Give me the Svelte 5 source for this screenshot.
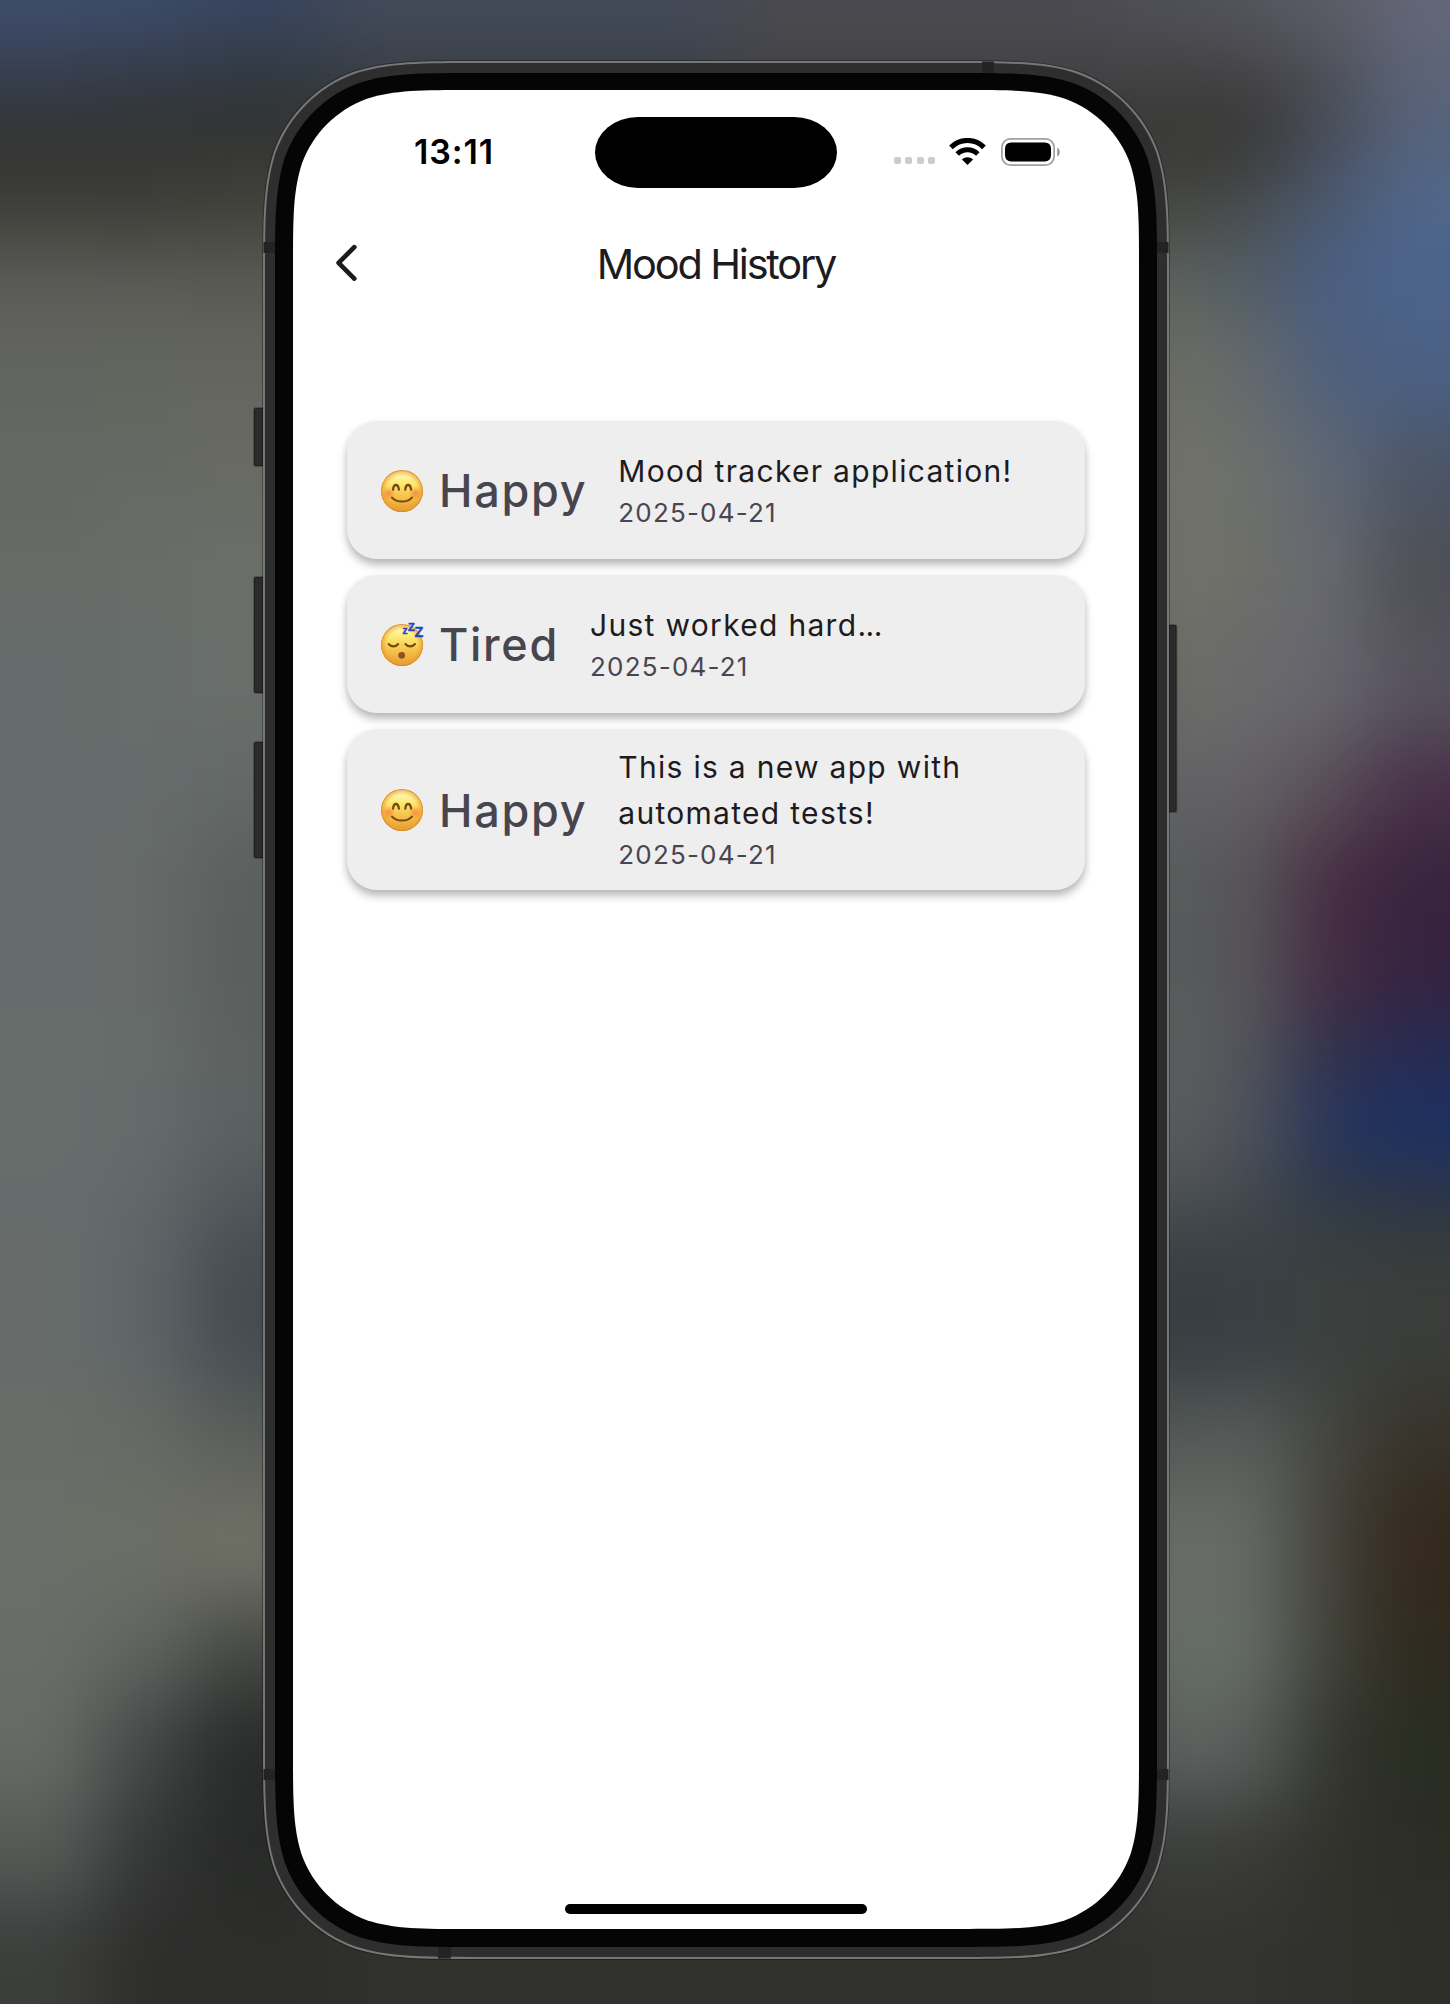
<script>
  const moods = [
    { face: 'happy', label: 'Happy', note: 'Mood tracker application!', tail: '', date: '2025-04-21' },
    { face: 'tired', label: 'Tired', note: 'Just worked hard', tail: '...', date: '2025-04-21' },
    { face: 'happy', label: 'Happy', note: 'This is a new app with automated tests!', tail: '', date: '2025-04-21' },
  ];

  // Continuous-curvature rounded rectangle
  function squircle(x, y, w, h, r) {
    const a = 1.52866 * r, b = 1.08849 * r, c = 0.86841 * r, d = 0.63149 * r;
    const e = 0.07491 * r, f = 0.37282 * r, g = 0.16906 * r;
    const X = x + w, Y = y + h;
    return `M${x + a},${y}L${X - a},${y}C${X - b},${y} ${X - c},${y} ${X - d},${y + e}` +
      `C${X - f},${y + g} ${X - g},${y + f} ${X - e},${y + d}C${X},${y + c} ${X},${y + b} ${X},${y + a}` +
      `L${X},${Y - a}C${X},${Y - b} ${X},${Y - c} ${X - e},${Y - d}` +
      `C${X - g},${Y - f} ${X - f},${Y - g} ${X - d},${Y - e}C${X - c},${Y} ${X - b},${Y} ${X - a},${Y}` +
      `L${x + a},${Y}C${x + b},${Y} ${x + c},${Y} ${x + d},${Y - e}` +
      `C${x + f},${Y - g} ${x + g},${Y - f} ${x + e},${Y - d}C${x},${Y - c} ${x},${Y - b} ${x},${Y - a}` +
      `L${x},${y + a}C${x},${y + b} ${x},${y + c} ${x + e},${y + d}` +
      `C${x + g},${y + f} ${x + f},${y + g} ${x + d},${y + e}C${x + c},${y} ${x + b},${y} ${x + a},${y}Z`;
  }

  // Backdrop colour field: blurred patches, one row per band
  const cols = [-150, 100, 190, 330, 720, 1120, 1220, 1290, 1370, 1600];
  const bands = [
    [-150, '3e4d6c 3c4b69 394660 434a5a 4a4a50 505158 55565e 5b5c66 646678'],
    [45, '363e4e 333b48 30383f 3a3f46 444548 424242 444447 4c4e56 5b6377'],
    [100, '333433 333433 333432 333333 333333 393835 373635 484d58 56637b'],
    [170, '3c3c37 3c3c37 40403a 444444 444444 444741 484d50 4a5971 4f668b'],
    [240, '5b5c57 5a5b55 5a5a54 555555 555555 5c625d 505b66 4a5e82 4c638a'],
    [320, '62645f 63655f 64655f 555555 555555 6b6d64 63696c 4e5f7d 4b6084'],
    [420, '656863 666963 686a63 555555 555555 70726a 6c6f6b 5e6775 4b5566'],
    [520, '666b68 686d69 6a6e69 555555 555555 707269 6d6e68 676970 4e4f55'],
    [620, '656b6a 676d6b 696e6b 555555 555555 6b6c67 6a6a6c 66656e 55525c'],
    [740, '656b6a 666c6b 646968 555555 555555 626365 636066 594e58 493149'],
    [830, '666c6b 666b6a 5b605f 555555 555555 585b5b 57545a 492f43 39243e'],
    [910, '666c6b 666b6a 5a5f5d 555555 555555 575a5a 555359 452b42 352340'],
    [1010, '676d6b 666c6a 5c615f 555555 555555 5b5e5d 52535a 33304b 282a50'],
    [1080, '676d6b 656b6a 5b6160 555555 555555 595c5d 4c5059 27355b 1d3062'],
    [1170, '666c6b 62686a 50575a 555555 555555 4a4f52 42474c 303945 2d3645'],
    [1230, '676c6b 5f6567 454c51 444444 444444 373d41 3a4044 3b403f 3a3d3a'],
    [1390, '686d68 666a65 5a5e5a 555555 555555 535856 585c5a 44453f 37332b'],
    [1480, '696e68 6b6e65 6d6e64 555555 555555 686c66 646a64 42413a 34291e'],
    [1610, '686d69 5f6360 444643 444444 444444 666d68 656b66 3f4139 2e2a1f'],
    [1700, '656a66 444745 292b2a 333333 333333 5d625f 595d5b 34362f 292d22'],
    [1800, '555a57 353736 282a29 30302c 30302c 3c3e3c 3a3b38 31322c 2c2d25'],
    [1900, '3c3e3c 2d2e2c 2d2e2b 30302c 30302c 33332f 33332f 30312c 2e2f28'],
    [2150, ''],
  ];
  const patches = bands.slice(0, -1).flatMap(([y, line], i) =>
    line.split(' ').map((c, j) => ({
      x: cols[j], y, w: cols[j + 1] - cols[j] + 1, h: bands[i + 1][0] - y + 1, fill: '#' + c,
    }))
  );
</script>

<div class="stage">
  <svg class="scene" width="1450" height="2004" viewBox="0 0 1450 2004" aria-hidden="true">
    <defs>
      <filter id="soft" filterUnits="userSpaceOnUse" x="-150" y="-150" width="1750" height="2300" color-interpolation-filters="sRGB">
        <feGaussianBlur stdDeviation="36" />
      </filter>
    </defs>
    <g filter="url(#soft)">
      {#each patches as p}
        <rect x={p.x} y={p.y} width={p.w} height={p.h} fill={p.fill} />
      {/each}
    </g>

    <g fill="#2b2b2b" stroke="#000" stroke-opacity=".25" stroke-width="2">
      <rect x="254" y="408" width="16" height="58" rx="2" />
      <rect x="254" y="577" width="16" height="116" rx="2" />
      <rect x="254" y="742" width="16" height="116" rx="2" />
      <rect x="1162" y="625" width="14.5" height="187" rx="2" />
    </g>
    <path d={squircle(262, 60, 908, 1900, 145)} fill="#000" fill-opacity=".3" />
    <path d={squircle(263, 61, 906, 1898, 144)} fill="#777" />
    <path d={squircle(265, 63, 902, 1894, 142)} fill="#2e2e2e" />
    <g fill="#232323">
      <rect x="263.5" y="242" width="12.5" height="11" />
      <rect x="1156" y="242" width="12.5" height="11" />
      <rect x="263.5" y="1769" width="12.5" height="11" />
      <rect x="1156" y="1769" width="12.5" height="11" />
      <rect x="982" y="61.5" width="12" height="12.5" />
      <rect x="438" y="1946" width="13" height="12.5" />
    </g>
    <path d={squircle(275, 73, 882, 1874, 133)} fill="#040504" />
    <path d={squircle(293, 90, 846, 1839, 117)} fill="#fff" />
  </svg>

  <main class="screen">
    <div class="status">
      <span class="time">13:11</span>
      <span class="island"></span>
      <div class="indicators">
        <span class="dots"><i></i><i></i><i></i><i></i></span>
        <svg class="wifi" width="37" height="27" viewBox="0 0 37 27">
          <path d="M2 9.3a23.4 23.4 0 0 1 33 0" fill="none" stroke="#000" stroke-width="5.2" />
          <path d="M8.2 15.9a14.6 14.6 0 0 1 20.6 0" fill="none" stroke="#000" stroke-width="5" />
          <path d="M18.5 27l-5.6-5.6a8.2 8.2 0 0 1 11.2 0z" />
        </svg>
        <svg class="battery" width="60" height="28" viewBox="0 0 60 28">
          <rect x=".9" y=".9" width="52.2" height="26.2" rx="8.5" fill="none" stroke="#a0a0a0" stroke-width="1.7" />
          <rect x="4" y="4.4" width="46" height="19" rx="5.8" />
          <path d="M56.2 9.6a4.9 4.9 0 0 1 0 8.8z" fill="#999" />
        </svg>
      </div>
    </div>

    <header class="bar">
      <svg class="back" width="24" height="38" viewBox="0 0 24 38">
        <path d="M19.3 3.2L3.6 18.8l15.7 15.8" fill="none" stroke="#1d1b20" stroke-width="4.7" stroke-linecap="round" stroke-linejoin="round" />
      </svg>
      <h1>Mood History</h1>
    </header>

    <section class="list">
      {#each moods as m, i}
        <article class="card">
          <svg class="face" width="42" height="42" viewBox="0 0 42 42">
            <defs>
              <linearGradient id="skin{i}" x1="0" y1="0" x2="0" y2="1">
                <stop offset="0" stop-color="#fffbd8" />
                <stop offset=".28" stop-color="#fdee78" />
                <stop offset=".6" stop-color="#f7c64d" />
                <stop offset="1" stop-color="#e69a33" />
              </linearGradient>
              <radialGradient id="rim{i}">
                <stop offset=".72" stop-color="#e9982f" stop-opacity="0" />
                <stop offset=".92" stop-color="#eba234" stop-opacity=".6" />
                <stop offset="1" stop-color="#d08020" />
              </radialGradient>
              <radialGradient id="blush{i}">
                <stop offset="0" stop-color="#f4773a" stop-opacity=".75" />
                <stop offset="1" stop-color="#f4873a" stop-opacity="0" />
              </radialGradient>
            </defs>
            <circle cx="21" cy="21" r="21" fill="url(#skin{i})" />
            <circle cx="21" cy="21" r="21" fill="url(#rim{i})" />
            {#if m.face === 'happy'}
              <ellipse cx="7.5" cy="23.5" rx="7.3" ry="7" fill="url(#blush{i})" />
              <ellipse cx="34.5" cy="23.5" rx="7.3" ry="7" fill="url(#blush{i})" />
              <g fill="none" stroke="#784811" stroke-linecap="round">
                <path d="M12.1 19.7c.5-6.3 5.1-6.3 5.8 0M24.3 19.7c.5-6.3 5.1-6.3 5.8 0" stroke-width="2.3" />
                <path d="M11 27.6c5 5.3 15 5.3 20 0" stroke-width="2" />
              </g>
            {:else}
              <g fill="none" stroke="#784811" stroke-width="2.1" stroke-linecap="round">
                <path d="M7.6 20c2.4 3.1 7.2 3.1 9.6 0M24.4 20c2.4 3.1 7.2 3.1 9.6 0" />
              </g>
              <circle cx="20.7" cy="31.3" r="3.4" fill="#8b5320" />
              <g class="zzz">
                <text x="21.4" y="10" font-size="10">z</text>
                <text x="26.9" y="7.4" font-size="11">Z</text>
                <text x="33.5" y="13.4" font-size="14.5">Z</text>
              </g>
            {/if}
          </svg>
          <span class="label">{m.label}</span>
          <div class="text">
            <p class="note">{m.note}<span class="tail">{m.tail}</span></p>
            <p class="date">{m.date}</p>
          </div>
        </article>
      {/each}
    </section>

    <span class="home"></span>
  </main>
</div>

<style>
  :global(body) { margin: 0; background: #333; }
  .stage {
    position: relative;
    width: 1450px;
    height: 2004px;
    overflow: hidden;
    box-sizing: border-box;
    padding: 90px 311px 75px 293px;
    font-family: Inter, "Liberation Sans", sans-serif;
  }
  .scene { position: absolute; inset: 0; }
  .screen {
    position: relative;
    height: 1839px;
    display: flex;
    flex-direction: column;
  }
  .status {
    display: grid;
    grid-template-columns: 302px 242px 302px;
    align-items: center;
    height: 71px;
    margin-top: 26.5px;
  }
  .time {
    padding-left: 121px;
    font-size: 34px;
    font-weight: 600;
    line-height: 40px;
    letter-spacing: 0.9px;
    color: #000;
  }
  .island { height: 71px; border-radius: 43px / 35.5px; background: #000; }
  .indicators { display: flex; align-items: center; padding: 0 0 1px 56.5px; }
  .dots { display: flex; gap: 4.6px; margin-top: 18px; }
  .dots i { width: 7px; height: 7px; border-radius: 2px; background: #ccc; }
  .wifi { margin-left: 14px; }
  .battery { margin-left: 14.5px; }
  .bar {
    display: grid;
    grid-template-columns: 80px 1fr 80px;
    align-items: center;
    height: 60px;
    margin-top: 46.5px;
  }
  .back { margin: 0 0 2px 42px; }
  h1 {
    margin: 0;
    text-align: center;
    font-size: 41.5px;
    font-weight: 400;
    line-height: 60px;
    letter-spacing: -2.2px;
    color: #1d1b20;
  }
  .list {
    display: flex;
    flex-direction: column;
    gap: 16px;
    margin: 127px 54px 0;
  }
  .card {
    display: flex;
    align-items: center;
    box-sizing: border-box;
    min-height: 138px;
    padding: 15px 34px;
    border-radius: 30px;
    background: #eee;
    box-shadow: 0 6px 9px rgba(0, 0, 0, 0.25), 0 2px 7px rgba(0, 0, 0, 0.06);
  }
  .face { flex: none; overflow: visible; margin-top: 1px; }
  .zzz {
    font-family: "Liberation Sans", sans-serif;
    font-weight: 700;
    fill: #1f45c0;
    stroke: #1f45c0;
    stroke-width: 0.4;
  }
  .label {
    margin-left: 16px;
    padding-top: 2px;
    font-size: 45px;
    font-weight: 500;
    line-height: 60px;
    letter-spacing: 1.7px;
    color: #49454f;
  }
  .text { margin-left: 31px; padding-bottom: 2px; flex: 1; }
  p { margin: 0; }
  .note { font-size: 30px; line-height: 46px; letter-spacing: 1.3px; color: #1d1b20; max-width: 410px; }
  .tail { letter-spacing: -0.4px; }
  .date { font-size: 26px; line-height: 37px; letter-spacing: 1.2px; color: #49454f; }
  .home {
    width: 302px;
    height: 10px;
    margin: auto auto 15px;
    border-radius: 5px;
    background: #000;
  }
</style>
